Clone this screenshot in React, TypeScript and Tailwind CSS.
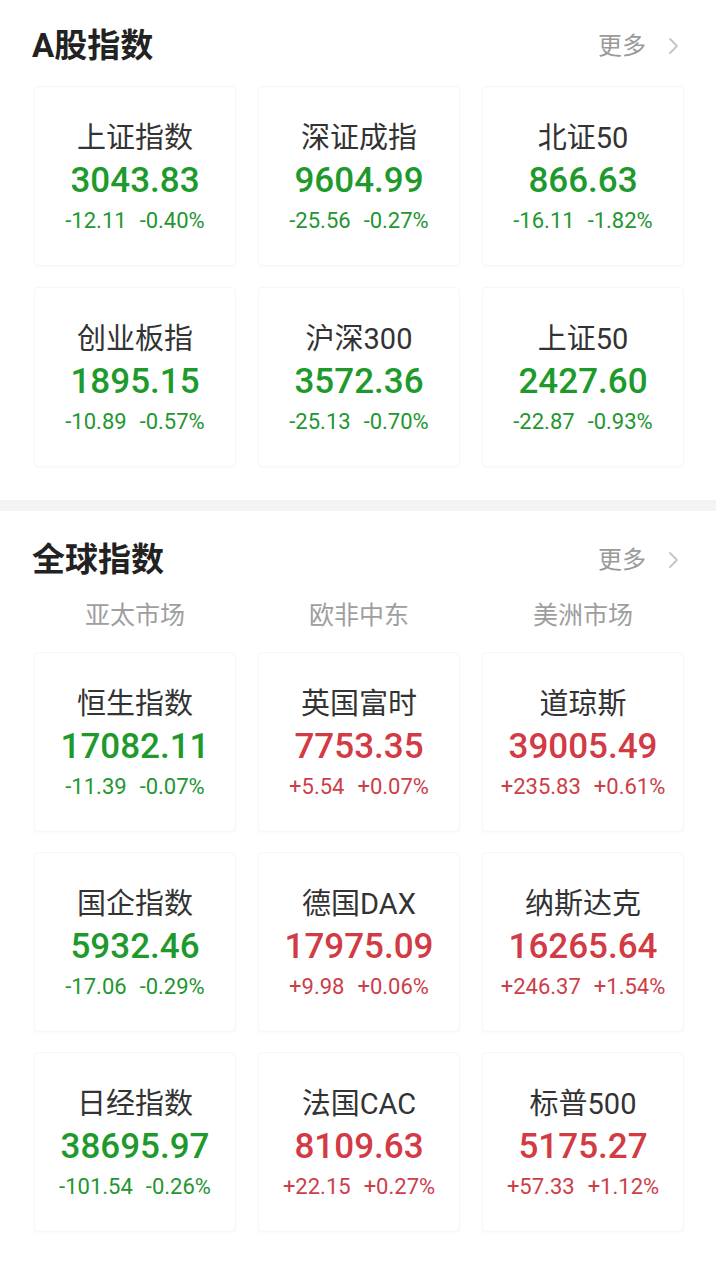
import React from "react";

type Item = { name: string; value: string; c1: string; c2: string; up: boolean };

const aShares: Item[] = [
  { name: "上证指数", value: "3043.83", c1: "-12.11", c2: "-0.40%", up: false },
  { name: "深证成指", value: "9604.99", c1: "-25.56", c2: "-0.27%", up: false },
  { name: "北证50", value: "866.63", c1: "-16.11", c2: "-1.82%", up: false },
  { name: "创业板指", value: "1895.15", c1: "-10.89", c2: "-0.57%", up: false },
  { name: "沪深300", value: "3572.36", c1: "-25.13", c2: "-0.70%", up: false },
  { name: "上证50", value: "2427.60", c1: "-22.87", c2: "-0.93%", up: false },
];

const global: Item[] = [
  { name: "恒生指数", value: "17082.11", c1: "-11.39", c2: "-0.07%", up: false },
  { name: "英国富时", value: "7753.35", c1: "+5.54", c2: "+0.07%", up: true },
  { name: "道琼斯", value: "39005.49", c1: "+235.83", c2: "+0.61%", up: true },
  { name: "国企指数", value: "5932.46", c1: "-17.06", c2: "-0.29%", up: false },
  { name: "德国DAX", value: "17975.09", c1: "+9.98", c2: "+0.06%", up: true },
  { name: "纳斯达克", value: "16265.64", c1: "+246.37", c2: "+1.54%", up: true },
  { name: "日经指数", value: "38695.97", c1: "-101.54", c2: "-0.26%", up: false },
  { name: "法国CAC", value: "8109.63", c1: "+22.15", c2: "+0.27%", up: true },
  { name: "标普500", value: "5175.27", c1: "+57.33", c2: "+1.12%", up: true },
];

const FONT = { fontFamily: 'Roboto, "Noto Sans CJK SC", "Noto Sans", sans-serif' };

function Card({ item }: { item: Item }) {
  return (
    <div className="h-[180px] rounded-[4px] border border-[#f6f6f6] bg-white shadow-[0_1px_3px_rgba(0,0,0,0.025)] flex flex-col items-center pt-[33px]">
      <div className="text-[29px] leading-[36px] text-[#333333]">{item.name}</div>
      <div
        className={
          "mt-[5px] text-[35px] leading-[40px] font-medium " +
          (item.up ? "text-[#d23a44]" : "text-[#1e9a2c]")
        }
      >
        {item.value}
      </div>
      <div
        className={
          "mt-[6px] text-[22px] leading-[28px] flex gap-[13px] " +
          (item.up ? "text-[#cc3e48]" : "text-[#23962f]")
        }
      >
        <span>{item.c1}</span>
        <span>{item.c2}</span>
      </div>
    </div>
  );
}

function Header({ title }: { title: string }) {
  return (
    <div className="h-[44px] flex items-center justify-between pl-[32px] pr-[36px]">
      <div className="text-[33px] font-bold text-[#222222] leading-[44px]">{title}</div>
      <div className="flex items-center gap-[22px] text-[#9a9a9a]">
        <span className="text-[24px] leading-[30px]">更多</span>
        <svg width="12" height="18" viewBox="0 0 12 18" fill="none">
          <path d="M2 2 L9 9 L2 16" stroke="#c4c4c4" strokeWidth="1.8" strokeLinecap="round" strokeLinejoin="round" />
        </svg>
      </div>
    </div>
  );
}

export default function App() {
  return (
    <div className="w-[716px] h-[1264px] bg-white overflow-hidden" style={FONT}>
      <div className="pt-[24px] pb-[33px]">
        <Header title="A股指数" />
        <div className="mt-[18px] grid grid-cols-3 gap-x-[22px] gap-y-[21px] pl-[34px] pr-[32px]">
          {aShares.map((it) => (
            <Card key={it.name} item={it} />
          ))}
        </div>
      </div>
      <div className="h-[11px] bg-[#f4f4f4]" />
      <div className="pt-[27px]">
        <Header title="全球指数" />
        <div className="mt-[18px] grid grid-cols-3 gap-x-[22px] pl-[34px] pr-[32px]">
          {["亚太市场", "欧非中东", "美洲市场"].map((t) => (
            <div key={t} className="text-center text-[25px] leading-[32px] text-[#9e9e9e]">
              {t}
            </div>
          ))}
        </div>
        <div className="mt-[20px] grid grid-cols-3 gap-x-[22px] gap-y-[20px] pl-[34px] pr-[32px]">
          {global.map((it) => (
            <Card key={it.name} item={it} />
          ))}
        </div>
      </div>
    </div>
  );
}
